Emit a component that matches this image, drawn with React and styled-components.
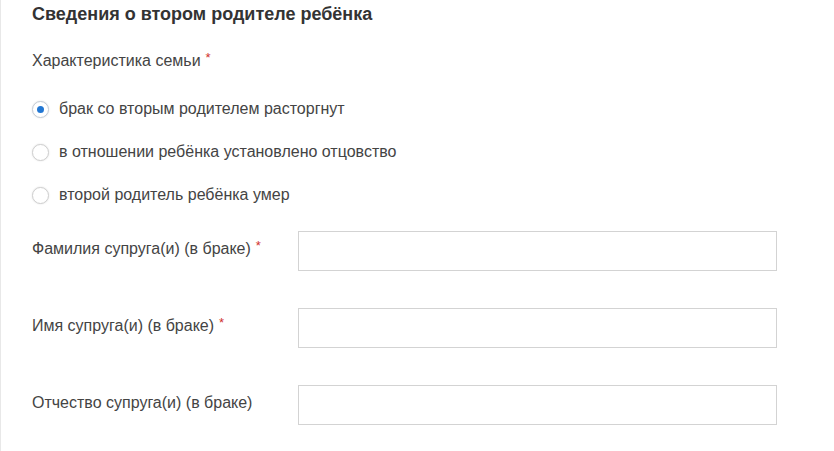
import React from 'react';
import styled, { createGlobalStyle } from 'styled-components';

const GlobalStyle = createGlobalStyle`
    body{
        margin:0;
        background:#fff;
        font-family:"Liberation Sans", Arial, sans-serif;
    }
`;

const Page = styled.section`
    min-height:451px;
    box-sizing:border-box;
    border-left:1px solid #e8e8e8;
    padding:4px 0 0 31px;
`;

const Title = styled.h2`
    margin:0;
    font-size:18px;
    line-height:21px;
    font-weight:bold;
    color:#333;
`;

const GroupLabel = styled.p`
    margin:26px 0 0;
    font-size:16px;
    line-height:19px;
    color:#444;
`;

const Required = styled.span`
    color:#d0312d;
    font-size:13px;
    margin-left:5px;
    vertical-align:top;
    line-height:14px;
`;

const RadioList = styled.ul`
    list-style:none;
    margin:28px 0 0;
    padding:0;
    display:flex;
    flex-direction:column;
    gap:21px;
`;

const RadioItem = styled.li`
    display:flex;
    align-items:center;
    height:22px;
    font-size:16px;
    color:#444;
`;

const RadioMark = styled.span`
    width:17px;
    height:17px;
    box-sizing:border-box;
    border:1px solid ${props => props.checked ? '#c4ccd6' : '#cfcfcf'};
    border-radius:50%;
    background:#fff;
    box-shadow:0 0 2px rgba(0,0,0,.12);
    margin-right:10px;
    display:flex;
    align-items:center;
    justify-content:center;
    &::after{
        content:'';
        width:7px;
        height:7px;
        border-radius:50%;
        background:${props => props.checked ? '#2277d3' : 'transparent'};
    }
`;

const Fields = styled.div`
    margin-top:25px;
    display:flex;
    flex-direction:column;
    gap:37px;
`;

const FieldRow = styled.div`
    display:grid;
    grid-template-columns:266px 479px;
    align-items:center;
`;

const FieldLabel = styled.label`
    font-size:16px;
    line-height:19px;
    color:#444;
    margin-top:-6px;
`;

const TextInput = styled.input.attrs({ type: 'text' })`
    height:40px;
    box-sizing:border-box;
    border:1px solid #d3d3d3;
    background:#fff;
    padding:0 10px;
    font:16px "Liberation Sans", Arial, sans-serif;
    outline:none;
`;

const options = [
    { text: 'брак со вторым родителем расторгнут', checked: true },
    { text: 'в отношении ребёнка установлено отцовство' },
    { text: 'второй родитель ребёнка умер' },
];

const fields = [
    { label: 'Фамилия супруга(и) (в браке)', required: true },
    { label: 'Имя супруга(и) (в браке)', required: true },
    { label: 'Отчество супруга(и) (в браке)' },
];

export default function App() {
    return (
        <>
            <GlobalStyle />
            <Page>
                <Title>Сведения о втором родителе ребёнка</Title>
                <GroupLabel>
                    Характеристика семьи<Required>*</Required>
                </GroupLabel>
                <RadioList>
                    {options.map(o => (
                        <RadioItem key={o.text}>
                            <RadioMark checked={o.checked} />
                            {o.text}
                        </RadioItem>
                    ))}
                </RadioList>
                <Fields>
                    {fields.map(f => (
                        <FieldRow key={f.label}>
                            <FieldLabel>
                                {f.label}
                                {f.required && <Required>*</Required>}
                            </FieldLabel>
                            <TextInput />
                        </FieldRow>
                    ))}
                </Fields>
            </Page>
        </>
    );
}
